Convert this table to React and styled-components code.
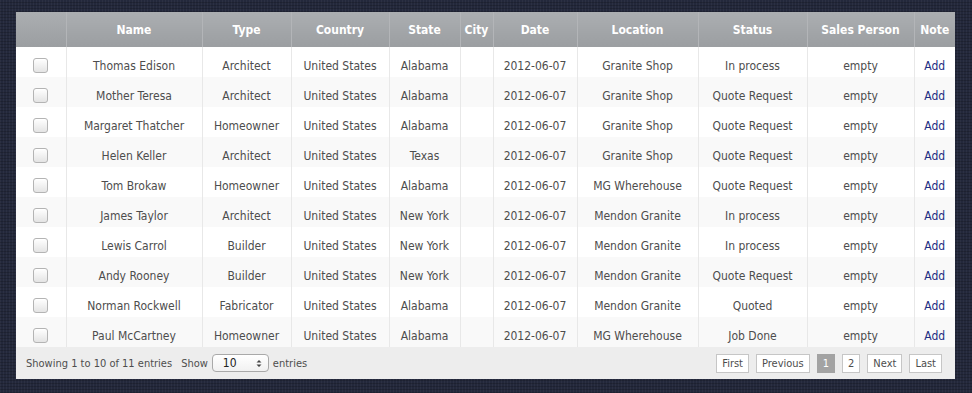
import React from "react";
import styled, { createGlobalStyle } from "styled-components";

const GlobalStyle = createGlobalStyle`
  html, body {
    margin: 0;
    padding: 0;
  }
  body {
    background-color: #23283b;
    background-image:
      repeating-linear-gradient(0deg, rgba(0,0,0,0.18) 0 1px, transparent 1px 3px),
      repeating-linear-gradient(90deg, rgba(255,255,255,0.04) 0 1px, transparent 1px 3px);
    min-height: 393px;
    font-family: "DejaVu Sans Condensed", "DejaVu Sans", Verdana, sans-serif;
    font-stretch: condensed;
  }
`;

const Page = styled.div`
  padding: 12px 0 0 16px;
`;

const Panel = styled.div`
  width: 939px;
  background: #ffffff;
`;

const Table = styled.table`
  width: 100%;
  border-collapse: collapse;
  table-layout: fixed;
  font-size: 12px;
`;

const Th = styled.th`
  height: 35px;
  padding: 1px 4px 0;
  box-sizing: border-box;
  background: linear-gradient(#abaeb1, #9b9ea1);
  color: #ffffff;
  font-weight: bold;
  font-size: 12px;
  text-align: center;
  white-space: nowrap;
  border-left: 1px solid #b3b5b8;
  &:first-child {
    border-left: none;
  }
`;

const Row = styled.tr`
  background: ${(p) => (p.$striped ? "#f9f9f9" : "#ffffff")};
`;

const Td = styled.td`
  height: 22px;
  padding: 8px 4px 0;
  line-height: 22px;
  text-align: center;
  color: #4d4d4d;
  white-space: nowrap;
  border-left: 1px solid #e8e8e8;
  &:first-child {
    border-left: none;
  }
`;

const Check = styled.span`
  display: inline-block;
  vertical-align: middle;
  width: 13px;
  height: 13px;
  border: 1px solid #b4b4b4;
  border-radius: 3px;
  background: linear-gradient(#ffffff, #e4e4e4);
  box-shadow: inset 0 1px 1px rgba(255, 255, 255, 0.8);
  margin-top: -3px;
`;

const NoteLink = styled.a`
  color: #1d2d82;
  text-decoration: none;
  cursor: pointer;
`;

const Footer = styled.div`
  display: flex;
  align-items: center;
  justify-content: space-between;
  height: 32px;
  padding: 0 13px 0 10px;
  background: #ededed;
  color: #4d4d4d;
  font-size: 11px;
`;

const Info = styled.div`
  display: flex;
  align-items: center;
  gap: 9px;
`;

const Length = styled.label`
  display: flex;
  align-items: center;
  gap: 4px;
`;

const SelectBox = styled.span`
  display: inline-flex;
  align-items: center;
  justify-content: space-between;
  box-sizing: border-box;
  width: 57px;
  height: 18px;
  padding: 0 6px 0 10px;
  border: 1px solid #a9a9a9;
  border-radius: 4px;
  background: linear-gradient(#ffffff, #f1f1f1);
  color: #222;
  font-size: 12px;
`;

const Arrows = styled.svg`
  width: 6px;
  height: 9px;
`;

const Pager = styled.div`
  display: flex;
  align-items: center;
  gap: 7px;
  padding-top: 1px;
`;

const PageButton = styled.span`
  display: inline-flex;
  align-items: center;
  justify-content: center;
  box-sizing: border-box;
  height: 19px;
  min-width: 17px;
  padding: 0 5px;
  border: 1px solid ${(p) => (p.$active ? "#a3a3a3" : "#c6c6c6")};
  background: ${(p) => (p.$active ? "#a3a3a3" : "#ffffff")};
  color: ${(p) => (p.$active ? "#ffffff" : "#4d4d4d")};
  font-size: 11px;
  cursor: pointer;
`;

const columns = [
  { key: "check", label: "", width: 50 },
  { key: "name", label: "Name", width: 136 },
  { key: "type", label: "Type", width: 89 },
  { key: "country", label: "Country", width: 98 },
  { key: "state", label: "State", width: 71 },
  { key: "city", label: "City", width: 33 },
  { key: "date", label: "Date", width: 84 },
  { key: "location", label: "Location", width: 121 },
  { key: "status", label: "Status", width: 109 },
  { key: "sales", label: "Sales Person", width: 107 },
  { key: "note", label: "Note", width: 41 },
];

const rows = [
  ["Thomas Edison", "Architect", "Alabama", "Granite Shop", "In process"],
  ["Mother Teresa", "Architect", "Alabama", "Granite Shop", "Quote Request"],
  ["Margaret Thatcher", "Homeowner", "Alabama", "Granite Shop", "Quote Request"],
  ["Helen Keller", "Architect", "Texas", "Granite Shop", "Quote Request"],
  ["Tom Brokaw", "Homeowner", "Alabama", "MG Wherehouse", "Quote Request"],
  ["James Taylor", "Architect", "New York", "Mendon Granite", "In process"],
  ["Lewis Carrol", "Builder", "New York", "Mendon Granite", "In process"],
  ["Andy Rooney", "Builder", "New York", "Mendon Granite", "Quote Request"],
  ["Norman Rockwell", "Fabricator", "Alabama", "Mendon Granite", "Quoted"],
  ["Paul McCartney", "Homeowner", "Alabama", "MG Wherehouse", "Job Done"],
];

const pages = ["First", "Previous", "1", "2", "Next", "Last"];

export default function App() {
  return (
    <>
      <GlobalStyle />
      <Page>
        <Panel>
          <Table>
            <colgroup>
              {columns.map((c) => (
                <col key={c.key} style={{ width: c.width }} />
              ))}
            </colgroup>
            <thead>
              <tr>
                {columns.map((c) => (
                  <Th key={c.key}>{c.label}</Th>
                ))}
              </tr>
            </thead>
            <tbody>
              {rows.map(([name, type, state, location, status], i) => (
                <Row key={name} $striped={i % 2 === 1}>
                  <Td>
                    <Check />
                  </Td>
                  <Td>{name}</Td>
                  <Td>{type}</Td>
                  <Td>United States</Td>
                  <Td>{state}</Td>
                  <Td></Td>
                  <Td>2012-06-07</Td>
                  <Td>{location}</Td>
                  <Td>{status}</Td>
                  <Td>empty</Td>
                  <Td>
                    <NoteLink>Add</NoteLink>
                  </Td>
                </Row>
              ))}
            </tbody>
          </Table>
          <Footer>
            <Info>
              <span>Showing 1 to 10 of 11 entries</span>
              <Length>
                Show
                <SelectBox>
                  10
                  <Arrows viewBox="0 0 6 9">
                    <path d="M0.5 3.5 L3 1 L5.5 3.5 Z M0.5 5.5 L3 8 L5.5 5.5 Z" fill="#444" />
                  </Arrows>
                </SelectBox>
                entries
              </Length>
            </Info>
            <Pager>
              {pages.map((p) => (
                <PageButton key={p} $active={p === "1"}>
                  {p}
                </PageButton>
              ))}
            </Pager>
          </Footer>
        </Panel>
      </Page>
    </>
  );
}
